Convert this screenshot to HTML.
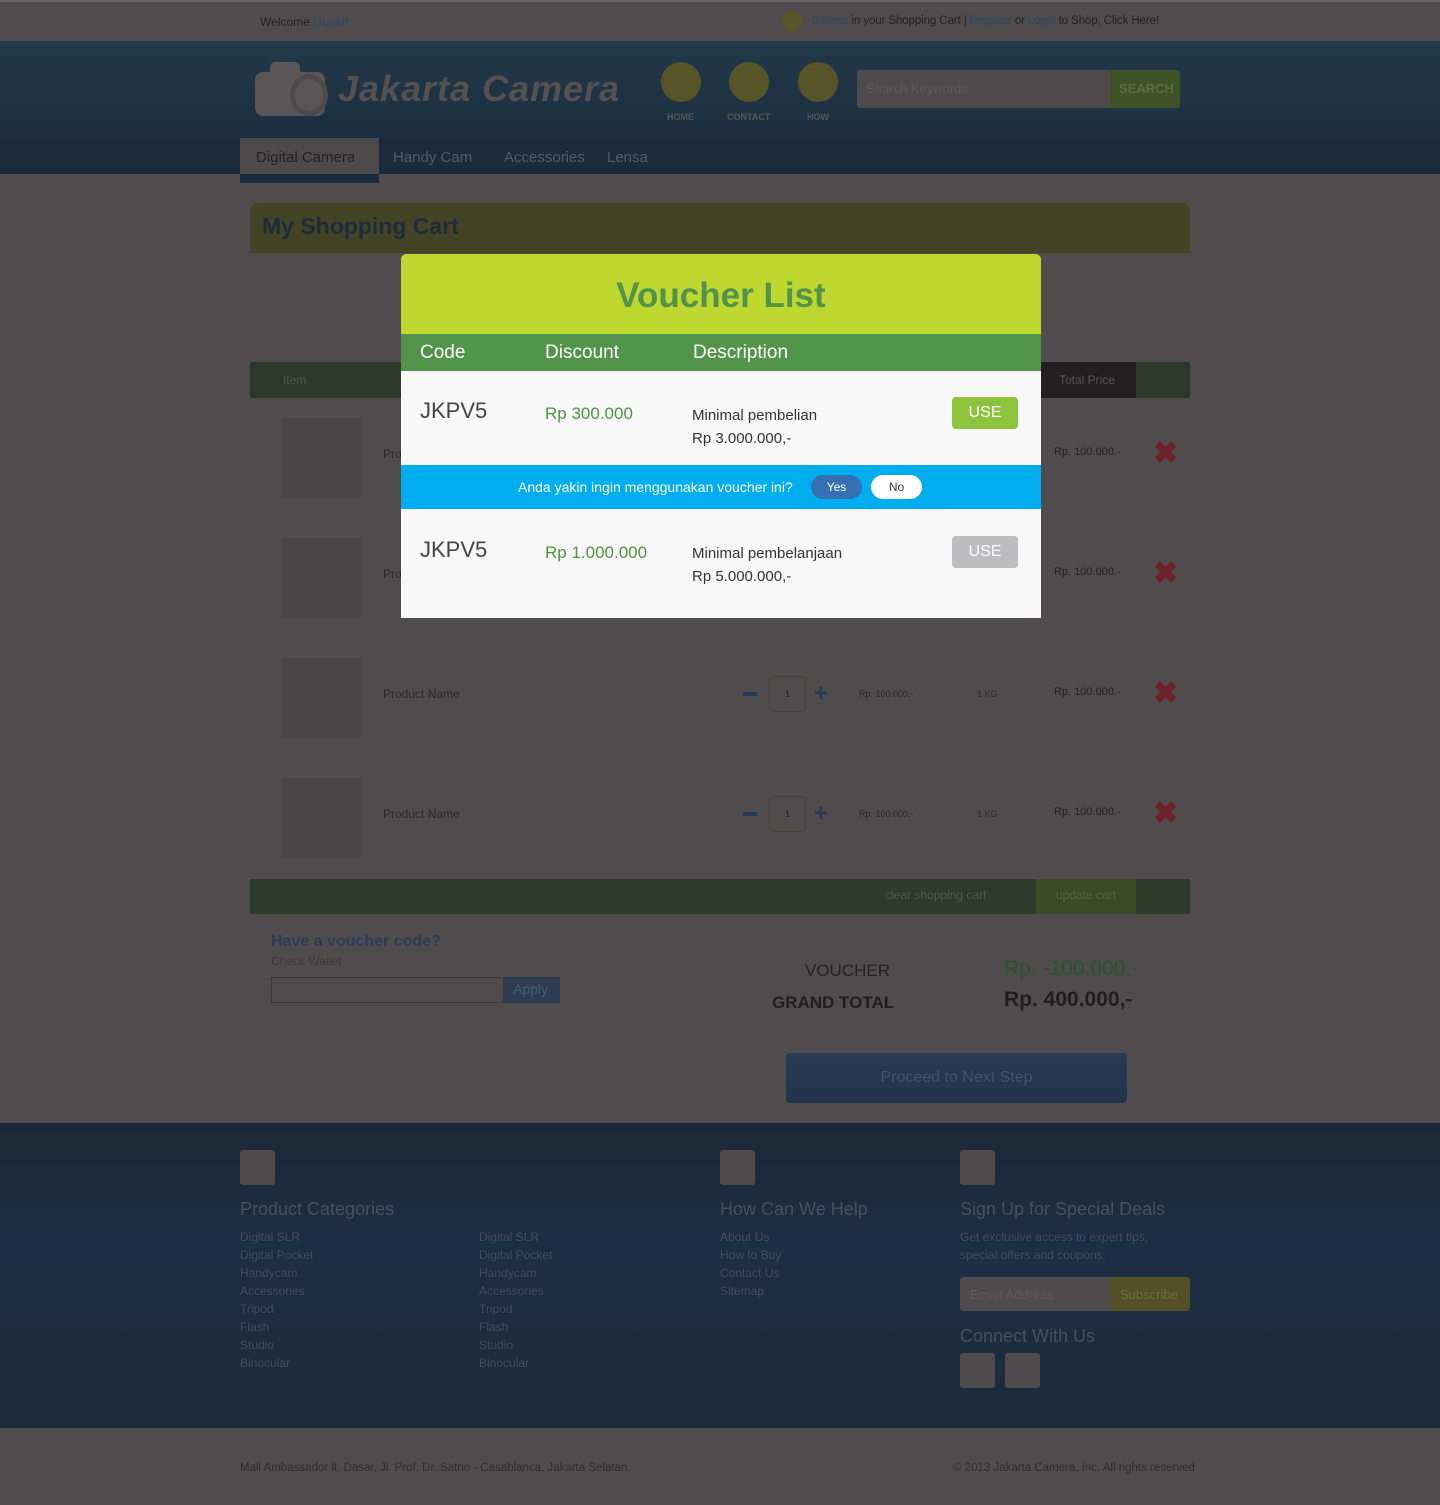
<!DOCTYPE html>
<html><head><meta charset="utf-8"><style>
*{margin:0;padding:0;box-sizing:border-box}
body{width:1440px;height:1505px;background:#504c4d;font-family:"Liberation Sans",sans-serif;position:relative;overflow:hidden;color:#2a2a2a}
.a{position:absolute}
.t{font-size:12px;white-space:nowrap}
.blue{color:#2c4767}
.circ{border-radius:50%;background:#575428}
.f{color:#3f4f5e;font-size:12px}
.box{background:#4a4647}
.x{color:#6e2326;font-size:30px;font-weight:bold}
</style></head><body>
<div class="a" style="left:0;top:0;width:1440px;height:2px;background:#6a6a6a"></div>
<div class="a t" style="left:260px;top:15px;color:#222">Welcome <span class="blue">Guest!</span></div>
<div class="a circ" style="left:782px;top:11px;width:20px;height:20px"></div>
<div class="a t" style="left:812px;top:15px;color:#222;font-size:11.5px;letter-spacing:-0.1px"><span class="blue">0 items</span> in your Shopping Cart | <span class="blue">Register</span> or <span class="blue">Login</span> to Shop, Click Here!</div>
<div class="a" style="left:0;top:41px;width:1440px;height:97px;background:linear-gradient(#223949,#1b2f40)"></div>
<div class="a" style="left:0;top:138px;width:1440px;height:36px;background:#1a2b3b"></div>
<div class="a" style="left:255px;top:72px;width:70px;height:44px;border-radius:8px;background:#5a5657"></div>
<div class="a" style="left:270px;top:62px;width:30px;height:14px;border-radius:5px 5px 0 0;background:#5a5657"></div>
<div class="a" style="left:290px;top:74px;width:38px;height:42px;border-radius:50%;border:5px solid #4e4a4b"></div>
<div class="a" style="left:338px;top:68px;font-size:36px;font-weight:bold;font-style:italic;color:#555152;letter-spacing:1px">Jakarta Camera</div>
<div class="a circ" style="left:661px;top:62px;width:40px;height:40px"></div>
<div class="a circ" style="left:729px;top:62px;width:40px;height:40px"></div>
<div class="a circ" style="left:798px;top:62px;width:40px;height:40px"></div>
<div class="a" style="left:667px;top:112px;font-size:9px;font-weight:bold;color:#555">HOME</div>
<div class="a" style="left:727px;top:112px;font-size:9px;font-weight:bold;color:#555">CONTACT</div>
<div class="a" style="left:807px;top:112px;font-size:9px;font-weight:bold;color:#555">HOW</div>
<div class="a" style="left:857px;top:70px;width:253px;height:38px;background:#4e4a4b;border-radius:3px 0 0 3px;padding:11px 9px;font-size:13px;color:#5d595a">Search Keywords</div>
<div class="a" style="left:1110px;top:70px;width:70px;height:38px;background:#3f5226;border-radius:0 3px 3px 0;padding:11px 9px;font-size:13px;font-weight:bold;color:#5d6a4a">SEARCH</div>
<div class="a" style="left:240px;top:138px;width:139px;height:36px;background:#4e4a4b;padding:11px 16px;font-size:15px;color:#222">Digital Camera</div>
<div class="a" style="left:240px;top:174px;width:139px;height:9px;background:#1a2b3b"></div>
<div class="a" style="left:393px;top:149px;font-size:15px;color:#4e5d6a">Handy Cam</div>
<div class="a" style="left:504px;top:149px;font-size:15px;color:#4e5d6a">Accessories</div>
<div class="a" style="left:607px;top:149px;font-size:15px;color:#4e5d6a">Lensa</div>

<div class="a" style="left:250px;top:203px;width:940px;height:50px;background:#434326;border-radius:8px 8px 0 0"></div>
<div class="a" style="left:262px;top:213px;font-size:23px;font-weight:bold;color:#1f2a3a">My Shopping Cart</div>
<div class="a" style="left:250px;top:362px;width:940px;height:36px;background:#2d372a"></div>
<div class="a" style="left:1040px;top:362px;width:96px;height:36px;background:#231f20"></div>
<div class="a t" style="left:283px;top:373px;color:#4a5a44">Item</div>
<div class="a t" style="left:1059px;top:373px;color:#555">Total Price</div>
<div class="a box" style="left:282px;top:418px;width:80px;height:80px"></div>
<div class="a box" style="left:282px;top:538px;width:80px;height:80px"></div>
<div class="a box" style="left:282px;top:658px;width:80px;height:80px"></div>
<div class="a box" style="left:282px;top:778px;width:80px;height:80px"></div>
<div class="a t" style="left:383px;top:447px;color:#2a2a2a">Pro</div>
<div class="a t" style="left:383px;top:567px;color:#2a2a2a">Pro</div>
<div class="a t" style="left:1054px;top:446px;color:#222;font-size:11px">Rp. 100.000.-</div>
<div class="a t" style="left:1054px;top:566px;color:#222;font-size:11px">Rp. 100.000.-</div>
<div class="a x" style="left:1153px;top:436px">✖</div>
<div class="a x" style="left:1153px;top:556px">✖</div>

<div class="a t" style="left:383px;top:687px;color:#2a2a2a">Product Name</div>
<div class="a t" style="left:383px;top:807px;color:#2a2a2a">Product Name</div>
<div class="a" style="left:743px;top:692px;width:14px;height:4px;background:#223a55"></div>
<div class="a" style="left:743px;top:812px;width:14px;height:4px;background:#223a55"></div>
<div class="a" style="left:769px;top:676px;width:37px;height:36px;border:1px solid #3d4a33;border-radius:4px;font-size:9px;text-align:center;line-height:34px;color:#222">1</div>
<div class="a" style="left:769px;top:796px;width:37px;height:36px;border:1px solid #3d4a33;border-radius:4px;font-size:9px;text-align:center;line-height:34px;color:#222">1</div>
<div class="a" style="left:814px;top:680px;font-size:24px;font-weight:bold;color:#223a55">+</div>
<div class="a" style="left:814px;top:800px;font-size:24px;font-weight:bold;color:#223a55">+</div>
<div class="a" style="left:859px;top:689px;font-size:9px;color:#2a2a2a">Rp. 100.000,-</div>
<div class="a" style="left:859px;top:809px;font-size:9px;color:#2a2a2a">Rp. 100.000,-</div>
<div class="a" style="left:977px;top:689px;font-size:9px;color:#2a2a2a">1 KG</div>
<div class="a" style="left:977px;top:809px;font-size:9px;color:#2a2a2a">1 KG</div>
<div class="a t" style="left:1054px;top:686px;color:#222;font-size:11px">Rp. 100.000.-</div>
<div class="a t" style="left:1054px;top:806px;color:#222;font-size:11px">Rp. 100.000.-</div>
<div class="a x" style="left:1153px;top:676px">✖</div>
<div class="a x" style="left:1153px;top:796px">✖</div>

<div class="a" style="left:250px;top:879px;width:940px;height:35px;background:#2d3a2a"></div>
<div class="a" style="left:1036px;top:879px;width:100px;height:35px;background:#3b4a26"></div>
<div class="a t" style="left:885px;top:888px;color:#4f5a4a">clear shopping cart</div>
<div class="a t" style="left:1056px;top:888px;color:#55653c">update cart</div>

<div class="a" style="left:271px;top:933px;font-size:16px;font-weight:bold;color:#2a3d57">Have a voucher code?</div>
<div class="a t" style="left:271px;top:954px;color:#3a3a3a">Check Wallet</div>
<div class="a" style="left:271px;top:977px;width:233px;height:26px;border:1px solid #3a3839"></div>
<div class="a" style="left:504px;top:977px;width:56px;height:26px;background:#2c3d52;font-size:14px;color:#4c5b70;padding:4px 9px">Apply</div>
<div class="a" style="left:805px;top:961px;font-size:17px;color:#222">VOUCHER</div>
<div class="a" style="left:772px;top:993px;font-size:17px;font-weight:bold;color:#1e1e1e">GRAND TOTAL</div>
<div class="a" style="left:1004px;top:957px;font-size:21px;color:#2a5233">Rp. -100.000,-</div>
<div class="a" style="left:1004px;top:988px;font-size:21px;font-weight:bold;color:#1e1e1e">Rp. 400.000,-</div>
<div class="a" style="left:786px;top:1053px;width:341px;height:50px;border-radius:4px;background:linear-gradient(#263a50,#22344b);text-align:center;line-height:50px;font-size:16px;color:#42546a">Proceed to Next Step</div>

<div class="a" style="left:0;top:1123px;width:1440px;height:305px;background:linear-gradient(#1b2837,#1b2f44 40%,#1b2a39)"></div>
<div class="a" style="left:240px;top:1150px;width:35px;height:35px;background:#4f4b4c;border-radius:3px"></div>
<div class="a" style="left:720px;top:1150px;width:35px;height:35px;background:#4f4b4c;border-radius:3px"></div>
<div class="a" style="left:960px;top:1150px;width:35px;height:35px;background:#4f4b4c;border-radius:3px"></div>
<div class="a" style="left:240px;top:1199px;font-size:18px;color:#45525e">Product Categories</div>
<div class="a" style="left:720px;top:1199px;font-size:18px;color:#45525e">How Can We Help</div>
<div class="a" style="left:960px;top:1199px;font-size:18px;color:#45525e">Sign Up for Special Deals</div>
<div class="a f" style="left:240px;top:1228px;line-height:18px">Digital SLR<br>Digital Pocket<br>Handycam<br>Accessories<br>Tripod<br>Flash<br>Studio<br>Binocular</div>
<div class="a f" style="left:479px;top:1228px;line-height:18px">Digital SLR<br>Digital Pocket<br>Handycam<br>Accessories<br>Tripod<br>Flash<br>Studio<br>Binocular</div>
<div class="a f" style="left:720px;top:1228px;line-height:18px">About Us<br>How to Buy<br>Contact Us<br>Sitemap</div>
<div class="a f" style="left:960px;top:1228px;line-height:18px">Get exclusive access to expert tips,<br>special offers and coupons.</div>
<div class="a" style="left:960px;top:1277px;width:150px;height:34px;background:#4f4b4c;border-radius:3px 0 0 3px;padding:10px;font-size:13px;color:#5e5a5b">Email Address</div>
<div class="a" style="left:1110px;top:1277px;width:80px;height:34px;background:#535026;border-radius:0 3px 3px 0;padding:10px;font-size:13px;color:#6c6a3e">Subscribe</div>
<div class="a" style="left:960px;top:1326px;font-size:18px;color:#45525e">Connect With Us</div>
<div class="a" style="left:960px;top:1353px;width:35px;height:35px;background:#4f4b4c;border-radius:3px"></div>
<div class="a" style="left:1005px;top:1353px;width:35px;height:35px;background:#4f4b4c;border-radius:3px"></div>
<div class="a t" style="left:240px;top:1462px;color:#2e2e2e;font-size:11.5px">Mall Ambassador lt. Dasar, Jl. Prof. Dr. Satrio - Casablanca, Jakarta Selatan.</div>
<div class="a t" style="left:953px;top:1462px;color:#2e2e2e;font-size:11.5px">© 2013 Jakarta Camera, Inc. All rights reserved</div>

<!-- modal -->
<div class="a" style="left:401px;top:254px;width:640px;height:364px;background:#f8f8f8;border-radius:6px 6px 0 0;overflow:hidden">
<div style="height:80px;background:#bed82f;text-align:center;font-size:35px;font-weight:bold;color:#52924a;line-height:84px">Voucher List</div>
<div style="height:37px;background:#52944a;position:relative;color:#fff;font-size:19px">
<span class="a" style="left:19px;top:8px">Code</span><span class="a" style="left:144px;top:8px">Discount</span><span class="a" style="left:292px;top:8px">Description</span></div>
<div class="a" style="left:19px;top:144px;font-size:22px;color:#444">JKPV5</div>
<div class="a" style="left:144px;top:150px;font-size:17px;color:#4e9440">Rp 300.000</div>
<div class="a" style="left:291px;top:150px;font-size:15px;color:#333;line-height:23px">Minimal pembelian<br>Rp 3.000.000,-</div>
<div class="a" style="left:551px;top:143px;width:66px;height:32px;background:#8cc43d;border-radius:4px;color:#fff;font-size:16px;text-align:center;line-height:32px">USE</div>
<div class="a" style="left:0;top:211px;width:640px;height:44px;background:#00adee"></div>
<div class="a" style="left:117px;top:225px;font-size:14px;color:#fff">Anda yakin ingin menggunakan voucher ini?</div>
<div class="a" style="left:410px;top:221px;width:51px;height:24px;background:#3570b2;border-radius:12px;color:#fff;font-size:12px;text-align:center;line-height:24px">Yes</div>
<div class="a" style="left:470px;top:221px;width:51px;height:24px;background:#fff;border-radius:12px;color:#333;font-size:12px;text-align:center;line-height:24px">No</div>
<div class="a" style="left:19px;top:283px;font-size:22px;color:#444">JKPV5</div>
<div class="a" style="left:144px;top:289px;font-size:17px;color:#4e9440">Rp 1.000.000</div>
<div class="a" style="left:291px;top:288px;font-size:15px;color:#333;line-height:23px">Minimal pembelanjaan<br>Rp 5.000.000,-</div>
<div class="a" style="left:551px;top:282px;width:66px;height:32px;background:#bdbdbf;border-radius:4px;color:#fff;font-size:16px;text-align:center;line-height:32px">USE</div>
</div>
</body></html>
